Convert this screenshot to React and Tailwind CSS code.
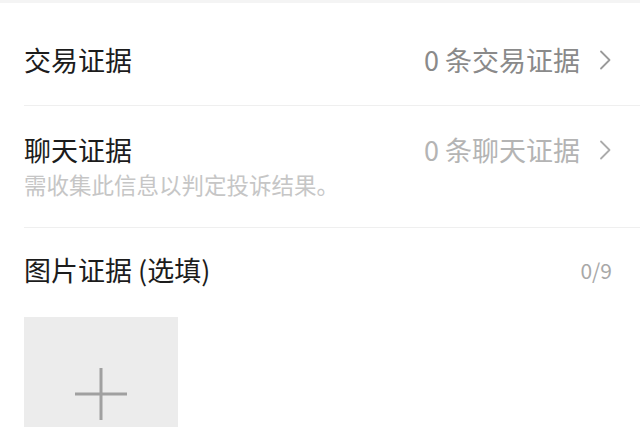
import { ChevronRight } from 'lucide-react'

const font = { fontFamily: '"Noto Sans CJK SC", "Noto Sans", sans-serif' }

function Chevron({ tone }) {
  return (
    <svg width="14" height="20" viewBox="0 0 14 20" className="ml-[18px]">
      <path d="M3 1.5 L11.5 10 L3 18.5" fill="none" stroke={tone} strokeWidth="1.8" strokeLinecap="round" strokeLinejoin="round" />
    </svg>
  )
}

export default function App() {
  return (
    <div className="w-[640px] h-[427px] overflow-hidden bg-white" style={font}>
      <div className="h-[3px] bg-[#f4f4f4]" />

      {/* 交易证据 */}
      <div className="flex items-center justify-between px-6 pt-[39px] pb-[27px]">
        <span className="text-[27px] leading-[36px] text-[#1c1c1c]">交易证据</span>
        <div className="flex items-center pr-[4px]">
          <span className="text-[27px] leading-[36px] text-[#8a8a8a]">0 条交易证据</span>
          <Chevron tone="#9a9a9a" />
        </div>
      </div>
      <div className="ml-6 h-px bg-[#efefef]" />

      {/* 聊天证据 */}
      <div className="px-6 pt-[26px] pb-[29px]">
        <div className="flex items-center justify-between">
          <span className="text-[27px] leading-[36px] text-[#1c1c1c]">聊天证据</span>
          <div className="flex items-center pr-[4px]">
            <span className="text-[27px] leading-[36px] text-[#b4b4b4]">0 条聊天证据</span>
            <Chevron tone="#ababab" />
          </div>
        </div>
        <p className="mt-[2px] text-[22.5px] leading-[28px] text-[#c6c6c6]">需收集此信息以判定投诉结果。</p>
      </div>
      <div className="ml-6 h-px bg-[#efefef]" />

      {/* 图片证据 */}
      <div className="px-6 pt-[24px]">
        <div className="flex items-center justify-between">
          <span className="text-[27px] leading-[36px] text-[#1c1c1c]">图片证据 (选填)</span>
          <span className="text-[21px] leading-[36px] text-[#a8a8a8] pr-[4px]">0/9</span>
        </div>
        <div className="mt-[29px] w-[154px] h-[154px] bg-[#ececec] flex items-center justify-center">
          <svg width="52" height="52" viewBox="0 0 52 52">
            <path d="M26 0 V52 M0 26 H52" stroke="#a0a0a0" strokeWidth="3" />
          </svg>
        </div>
      </div>
    </div>
  )
}
